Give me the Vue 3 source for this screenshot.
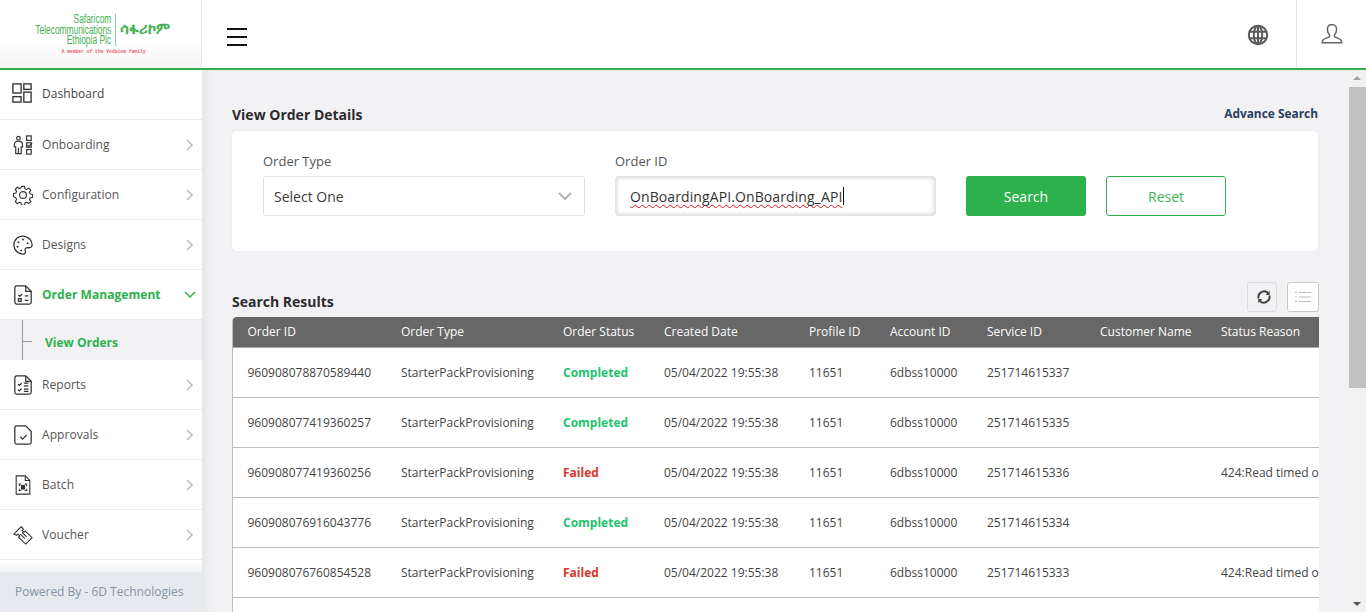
<script setup>
const orders = [
  ['960908078870589440', 'Completed', '251714615337', ''],
  ['960908077419360257', 'Completed', '251714615335', ''],
  ['960908077419360256', 'Failed', '251714615336', '424:Read timed o'],
  ['960908076916043776', 'Completed', '251714615334', ''],
  ['960908076760854528', 'Failed', '251714615333', '424:Read timed o']
]
const headers = ['Order ID', 'Order Type', 'Order Status', 'Created Date', 'Profile ID', 'Account ID', 'Service ID', 'Customer Name', 'Status Reason']
</script>

<template>
  <div class="app">
    <header class="topbar">
      <div class="logo">
        <div class="logo-main">
          <div class="logo-en"><span>Safaricom</span><span>Telecommunications</span><span>Ethiopia Plc</span></div>
          <div class="logo-am">ሳፋሪኮም</div>
        </div>
        <div class="logo-tag">A member of the Vodacom family</div>
      </div>
      <button class="burger" aria-label="Menu"><i></i><i></i><i></i></button>
      <div class="top-right">
        <div class="top-cell globe">
          <svg width="22" height="22" viewBox="0 0 22 22" fill="none" stroke="#5a5a5a" stroke-width="2">
            <circle cx="11" cy="11" r="9.200" />
            <ellipse cx="11" cy="11" rx="4.200" ry="9.200" />
            <path d="M11 1.800v18.400M2.400 7.800h17.200M2.400 14.200h17.200" />
          </svg>
        </div>
        <div class="top-cell user">
          <svg width="22" height="22" viewBox="0 0 22 22" fill="none" stroke="#666" stroke-width="1.500">
            <path d="M11 1.500c-3 0-4.600 2.200-4.600 5 0 2.200.9 4 2 5.200.5.600.4 1.700-.3 2.200-1.400.9-4.600 1.500-6 3-.6.7-.9 1.700-.9 2.800h19.600c0-1.100-.3-2.100-.9-2.800-1.400-1.500-4.600-2.100-6-3-.7-.5-.8-1.600-.3-2.200 1.100-1.200 2-3 2-5.200 0-2.800-1.600-5-4.600-5z" />
          </svg>
        </div>
      </div>
    </header>

    <div class="body">
      <aside class="sidebar">
        <nav class="menu">
          <a class="item first">
            <svg class="ic" viewBox="0 0 22 22" fill="none" stroke="#333" stroke-width="1.500">
              <rect x="1" y="1" width="9" height="10" /><rect x="13" y="1" width="8" height="6" /><rect x="1" y="15" width="9" height="6" /><rect x="13" y="10" width="8" height="11" />
            </svg>
            <span>Dashboard</span>
          </a>
          <a class="item">
            <svg class="ic" viewBox="0 0 22 22" fill="none" stroke="#333" stroke-width="1.300">
              <circle cx="6" cy="3.500" r="2" /><path d="M1.500 11c0-3 1.600-4.200 4.500-4.200s4.500 1.200 4.500 4.200v2H9V20.500H3V13H1.500z" /><path d="M6 14v6.500" />
              <rect x="15" y="1" width="5" height="5" /><rect x="15" y="8.500" width="5" height="5" /><rect x="15" y="16" width="5" height="5" /><path d="M16 11l1.500 1.500L21 9" />
            </svg>
            <span>Onboarding</span>
            <svg class="chev" viewBox="0 0 10 12"><path d="M2 1l5 5-5 5" /></svg>
          </a>
          <a class="item">
            <svg class="ic" viewBox="0 0 22 22" fill="none" stroke="#333" stroke-width="1.300">
              <circle cx="11" cy="11" r="3.800" />
              <path d="M9.300 1h3.400l.6 2.800 1.900.8 2.400-1.500 2.300 2.300-1.500 2.400.8 1.900 2.800.6v3.400l-2.800.6-.8 1.900 1.500 2.400-2.300 2.300-2.400-1.500-1.900.8-.6 2.800H9.300l-.6-2.800-1.900-.8-2.400 1.500-2.300-2.300 1.500-2.400-.8-1.900L0 12.700V9.300l2.800-.6.8-1.900-1.500-2.400 2.300-2.300 2.400 1.500 1.900-.8z" transform="translate(.5 .5) scale(.955)" />
            </svg>
            <span>Configuration</span>
            <svg class="chev" viewBox="0 0 10 12"><path d="M2 1l5 5-5 5" /></svg>
          </a>
          <a class="item">
            <svg class="ic" viewBox="0 0 22 22" fill="none" stroke="#333" stroke-width="1.400">
              <path d="M12 1.200C6 .6 1 5 1 11c0 5.600 4.500 10 10 10 2.500 0 3.200-1.800 2.500-3.500-.7-1.800.3-3.600 2.500-3.500 3 .2 5.300-.5 5-3.500-.5-4.500-4-8.300-9-9.300z" />
              <circle cx="6" cy="8" r="1.100" fill="#333" stroke="none" /><circle cx="11" cy="5" r="1.100" fill="#333" stroke="none" /><circle cx="5" cy="13" r="1.100" fill="#333" stroke="none" /><circle cx="9" cy="17" r="1.100" fill="#333" stroke="none" /><circle cx="16" cy="9" r="1.100" fill="#333" stroke="none" />
            </svg>
            <span>Designs</span>
            <svg class="chev" viewBox="0 0 10 12"><path d="M2 1l5 5-5 5" /></svg>
          </a>
          <a class="item active">
            <svg class="ic" viewBox="0 0 22 22" fill="none" stroke="#333" stroke-width="1.400">
              <path d="M2 3a2 2 0 0 1 2-2h10l6 6v12a2 2 0 0 1-2 2H4a2 2 0 0 1-2-2z" /><path d="M14 1v6h6" />
              <path d="M6 11l1.500 1.500L10 10M13 12h4M13 17h4" /><rect x="6" y="15" width="3" height="3" />
            </svg>
            <span>Order Management</span>
            <svg class="chev down" viewBox="0 0 12 10"><path d="M1 2l5 5 5-5" /></svg>
          </a>
          <div class="sub">
            <div class="tree"></div>
            <a class="sub-link">View Orders</a>
          </div>
          <a class="item">
            <svg class="ic" viewBox="0 0 22 22" fill="none" stroke="#333" stroke-width="1.400">
              <path d="M2 3a2 2 0 0 1 2-2h10l6 6v12a2 2 0 0 1-2 2H4a2 2 0 0 1-2-2z" /><path d="M14 1v6h6" />
              <path d="M5.500 10l1.500 1.500L9.500 9M5.500 16l1.500 1.500L9.500 15M12 9h5M12 12h5M12 15.500h5M12 18h5" />
            </svg>
            <span>Reports</span>
            <svg class="chev" viewBox="0 0 10 12"><path d="M2 1l5 5-5 5" /></svg>
          </a>
          <a class="item">
            <svg class="ic" viewBox="0 0 22 22" fill="none" stroke="#333" stroke-width="1.400">
              <path d="M2 3a2 2 0 0 1 2-2h10l6 6v12a2 2 0 0 1-2 2H4a2 2 0 0 1-2-2z" /><path d="M8 13l2.500 2.500L15 11" />
            </svg>
            <span>Approvals</span>
            <svg class="chev" viewBox="0 0 10 12"><path d="M2 1l5 5-5 5" /></svg>
          </a>
          <a class="item">
            <svg class="ic" viewBox="0 0 22 22" fill="none" stroke="#333" stroke-width="1.200">
              <path d="M3.500 1h10l5 5v15h-15z" /><path d="M13.500 1v5h5" />
              <path d="M7 12V10h2M13 10h2v2M7 15v2h2M13 17h2v-2" /><rect x="9.500" y="11.500" width="3" height="4" fill="#333" />
            </svg>
            <span>Batch</span>
            <svg class="chev" viewBox="0 0 10 12"><path d="M2 1l5 5-5 5" /></svg>
          </a>
          <a class="item">
            <svg class="ic" viewBox="0 0 22 22" fill="none" stroke="#333" stroke-width="1.200">
              <path d="M1 10l8-8 2.500 2.500-1.500 1.500 2 2 1.500-1.500L21 14l-7 7-8-7.500 1.500-1.500-2-2-1.500 1.500z" />
              <path d="M8 10l5 5M10 8l5 5" />
            </svg>
            <span>Voucher</span>
            <svg class="chev" viewBox="0 0 10 12"><path d="M2 1l5 5-5 5" /></svg>
          </a>
        </nav>
        <div class="fade"></div>
        <footer class="powered">Powered By - 6D Technologies</footer>
      </aside>

      <main class="main">
        <div class="title-row">
          <h2>View Order Details</h2>
          <a class="advance">Advance Search</a>
        </div>
        <section class="card">
          <div class="field type">
            <label>Order Type</label>
            <div class="select">
              <span>Select One</span>
              <svg width="14" height="9" viewBox="0 0 14 9" fill="none" stroke="#b4b4b4" stroke-width="2.200"><path d="M1 1l6 6 6-6" /></svg>
            </div>
          </div>
          <div class="field oid">
            <label>Order ID</label>
            <div class="input"><span class="typed">OnBoardingAPI.OnBoarding_API</span><i class="caret"></i></div>
          </div>
          <button class="btn primary">Search</button>
          <button class="btn ghost">Reset</button>
        </section>

        <div class="results-row">
          <h2>Search Results</h2>
          <div class="tools">
            <button class="tool refresh" aria-label="Refresh">
              <svg width="16" height="16" viewBox="0 0 16 16" fill="none" stroke="#444" stroke-width="2">
                <path d="M2.300 9.500A6 6 0 0 1 12.500 4" />
                <path d="M13.700 6.500A6 6 0 0 1 3.500 12" />
                <path d="M14 1.500V6h-4.300z" fill="#444" stroke="none" />
                <path d="M2 14.500V10h4.300z" fill="#444" stroke="none" />
              </svg>
            </button>
            <button class="tool list" aria-label="Columns">
              <svg width="16" height="12" viewBox="0 0 16 12" fill="none" stroke="#bbb" stroke-width="1.200">
                <path d="M0 1.500h2M4 1.500h12M0 6h2M4 6h12M0 10.500h2M4 10.500h12" />
              </svg>
            </button>
          </div>
        </div>

        <div class="table-wrap">
          <table>
            <colgroup>
              <col class="c1" /><col class="c2" /><col class="c3" /><col class="c4" /><col class="c5" /><col class="c6" /><col class="c7" /><col class="c8" /><col />
            </colgroup>
            <thead>
              <tr><th v-for="h in headers" :key="h">{{ h }}</th></tr>
            </thead>
            <tbody>
              <tr v-for="o in orders" :key="o[0]">
                <td>{{ o[0] }}</td>
                <td>StarterPackProvisioning</td>
                <td><b :class="o[1] === 'Failed' ? 'failed' : 'done'">{{ o[1] }}</b></td>
                <td>05/04/2022 19:55:38</td>
                <td>11651</td>
                <td>6dbss10000</td>
                <td>{{ o[2] }}</td>
                <td></td>
                <td>{{ o[3] }}</td>
              </tr>
              <tr class="blank"><td colspan="9"></td></tr>
            </tbody>
          </table>
        </div>
      </main>

      <div class="scrollbar" aria-hidden="true">
        <div class="arrow up"></div>
        <div class="thumb"></div>
        <div class="rail"></div>
        <div class="arrow dn"></div>
      </div>
    </div>
  </div>
</template>

<style>
html, body { margin: 0; height: 100%; overflow: hidden; }
</style>

<style scoped>
.app { width: 1366px; height: 612px; display: flex; flex-direction: column; overflow: hidden; font-family: "Open Sans", "DejaVu Sans", sans-serif; color: #333; background: #f2f2f5; }
.topbar { height: 70px; box-sizing: border-box; flex: none; display: flex; align-items: center; background: #fff; border-bottom: 2px solid #2db14c; }
.logo { width: 202px; height: 68px; box-sizing: border-box; flex: none; border-right: 1px solid #dcebdc; background: linear-gradient(#fff 60%, #f4f4f6); display: flex; flex-direction: column; align-items: center; padding-top: 14px; }
.logo-main { display: flex; align-items: center; margin-right: 0; }
.logo-en { display: flex; flex-direction: column; align-items: flex-end; font: 12.500px/10.500px "Liberation Sans", sans-serif; color: #45b052; padding-right: 4px; border-right: 1px solid #8fd09a; margin-right: 4px; width: 79px; }
.logo-en span { transform: scaleX(.67); transform-origin: right; white-space: nowrap; }
.logo-am { font: bold 14.500px "DejaVu Sans", sans-serif; color: #45b052; width: 49px; white-space: nowrap; }
.logo-tag { font: bold 5.500px/8px "Liberation Mono", monospace; color: #e8606c; margin-top: 2px; margin-left: 6px; transform: scaleX(.85); white-space: nowrap; }
.burger { width: 20px; height: 18px; margin: 5px 0 0 25px; padding: 0; border: 0; background: none; display: flex; flex-direction: column; justify-content: space-between; }
.burger i { display: block; height: 2px; background: #111; }
.top-right { margin-left: auto; height: 68px; display: flex; }
.top-cell { height: 68px; display: flex; align-items: center; justify-content: center; box-sizing: border-box; }
.globe { width: 78px; padding: 2px 0 0 2px; }
.user { width: 70px; border-left: 1px solid #d5ecd8; }

.body { flex: 1; min-height: 0; display: flex; }
.sidebar { width: 202px; flex: none; display: flex; flex-direction: column; background: #fff; }
.menu { flex: none; }
.item { height: 50px; box-sizing: border-box; display: flex; align-items: center; padding: 0 7px 0 13px; border-bottom: 1.500px solid #ececee; font-size: 12px; color: #555; letter-spacing: .05px; }
.item span { margin-left: 9px; }
.item.first { padding-left: 12px; padding-bottom: 3px; }
.item.first span { color: #444; margin-left: 10px; }
.ic { width: 20px; height: 20px; flex: none; }
.chev { width: 10px; height: 12px; margin-left: auto; fill: none; stroke: #b3bdc3; stroke-width: 1.500; }
.item.active { color: #2db14c; font-weight: 700; }
.chev.down { width: 12px; height: 10px; stroke: #2db14c; margin-right: -1px; }
.sub { height: 40px; background: #f2f2f5; position: relative; display: flex; align-items: center; padding: 4px 0 0 45px; box-sizing: border-box; }
.tree { position: absolute; left: 22px; top: 0; bottom: 0; width: 10px; border-left: 1px solid #999; }
.tree::after { content: ""; position: absolute; left: 0; top: 21px; width: 9px; border-top: 1px solid #999; }
.sub-link { font-size: 12px; font-weight: 700; color: #2db14c; }
.fade { flex: 1; background: linear-gradient(#fff, #f2f3f5); }
.powered { height: 40px; flex: none; background: #e6eaee; color: #8793a3; font-size: 12px; line-height: 40px; padding-left: 15px; }

.main { flex: 1; min-width: 0; overflow: hidden; box-sizing: border-box; padding: 0 30px; background: #f2f2f5; box-shadow: inset 10px 0 8px -6px #e4e4e8; }
.title-row { display: flex; justify-content: space-between; align-items: flex-start; height: 61px; padding: 35px 1px 0 0; box-sizing: border-box; }
h2 { margin: 0; font-size: 14px; font-weight: 700; color: #2b2b2b; line-height: 20px; }
.advance { font-size: 11.900px; font-weight: 700; color: #28405f; line-height: 16px; }
.card { height: 120px; width: 1086px; box-sizing: border-box; background: #fff; border-radius: 5px; box-shadow: 0 0 3px #e6e6ea; display: flex; align-items: flex-start; padding: 21px 0 0 31px; }
.field { display: flex; flex-direction: column; }
.field label { font-size: 13px; line-height: 19px; color: #555; margin-bottom: 5px; }
.type { width: 322px; margin-right: 30px; }
.select { height: 40px; box-sizing: border-box; border: 1px solid #e1e1e4; border-radius: 3px; display: flex; align-items: center; justify-content: space-between; padding: 0 12px 0 10px; font-size: 14px; color: #3a3a3a; }
.oid { width: 321px; margin-right: 30px; }
.input { height: 40px; box-sizing: border-box; border: 1px solid #e4e4e4; border-radius: 3px; box-shadow: inset 0 0 5px #c9c9c9; display: flex; align-items: center; padding-left: 14px; font-size: 14px; letter-spacing: .1px; color: #333; }
.typed { text-decoration: underline wavy #e01818 1px; text-underline-offset: 2px; text-decoration-skip-ink: none; }
.caret { display: block; width: 1px; height: 18px; background: #111; margin-left: 1px; }
.btn { width: 120px; height: 40px; margin-top: 24px; border-radius: 3px; font: 14px "Open Sans", sans-serif; box-sizing: border-box; }
.primary { background: #2db14c; border: 0; color: #fff; margin-right: 20px; }
.ghost { background: #fff; border: 1px solid #2db14c; color: #3fb25a; }

.results-row { display: flex; justify-content: space-between; align-items: flex-end; height: 66px; width: 1087px; padding-bottom: 5px; box-sizing: border-box; }
.tools { display: flex; gap: 10px; }
.tool { width: 30px; height: 30px; padding: 0; border: 1px solid #dcdcdf; border-radius: 3px; background: #f2f2f5; display: flex; align-items: center; justify-content: center; box-sizing: border-box; }
.tool.refresh svg { transform: translateX(2px) scale(.95); }
.tool.list { width: 32px; background: #fff; border-color: #c9c9cc; }
.table-wrap { width: 1087px; overflow: hidden; border-radius: 5px 0 0 0; }
table { width: 1087px; table-layout: fixed; border-collapse: collapse; background: #fff; border-left: 1px solid #bdbdbd; }
.c1 { width: 154px; } .c2 { width: 162px; } .c3 { width: 101px; } .c4 { width: 145px; } .c5 { width: 81px; } .c6 { width: 97px; } .c7 { width: 113px; } .c8 { width: 121px; }
th { height: 30px; box-sizing: border-box; background: #676767; color: #fff; font-size: 12px; font-weight: 400; text-align: left; padding: 0 0 0 14.500px; border-bottom: 1px solid #a9a9a9; white-space: nowrap; overflow: hidden; }
td { height: 50px; box-sizing: border-box; font-size: 12px; color: #444; padding: 0 0 0 14.500px; border-bottom: 1px solid #bdbdbd; white-space: nowrap; overflow: hidden; }
td b { font-weight: 700; }
.done { color: #21c46c; }
.failed { color: #d9342b; }

.scrollbar { width: 17px; flex: none; display: flex; flex-direction: column; background: #f1f1f1; }
.arrow { height: 17px; flex: none; position: relative; }
.arrow::after { content: ""; position: absolute; left: 4px; border-left: 4px solid transparent; border-right: 4px solid transparent; }
.arrow.up::after { top: 6px; border-bottom: 4px solid #a3a3a3; }
.arrow.dn::after { top: 7px; border-top: 4px solid #505050; }
.thumb { height: 301px; flex: none; background: #c1c1c1; }
.rail { flex: 1; }
</style>
